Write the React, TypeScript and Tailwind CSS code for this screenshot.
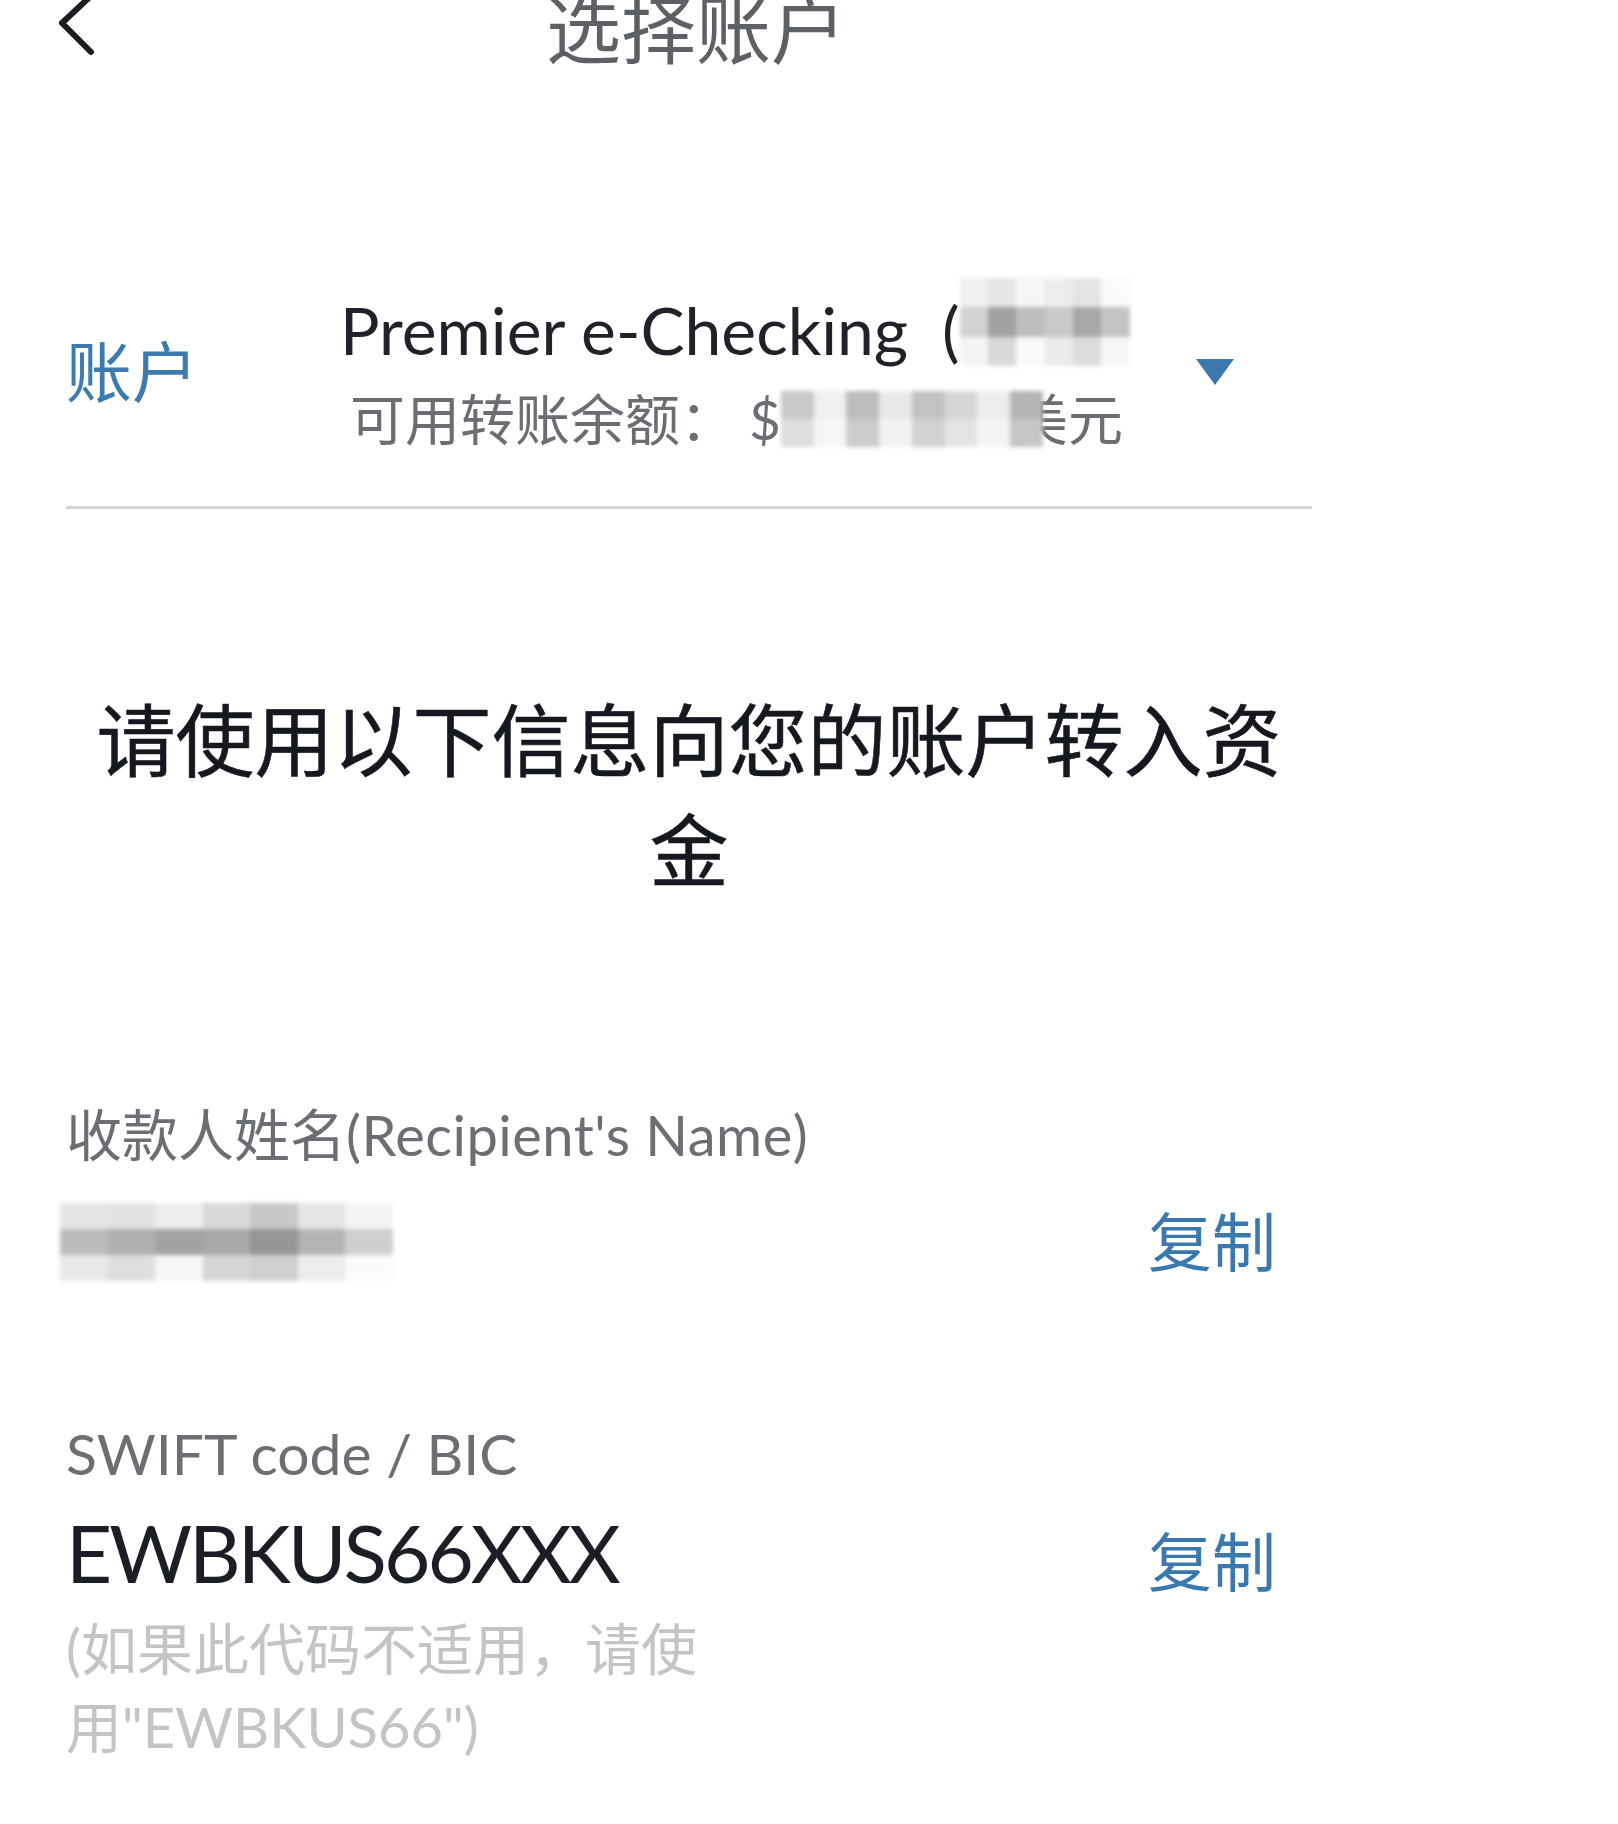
import { FC } from 'react';

const ACCOUNT_BLUR = [
  'bg-[#f0f0f0]', 'bg-[#e6e6e6]', 'bg-[#f6f6f6]', 'bg-[#ececec]', 'bg-[#e4e4e4]', 'bg-[#fafafa]',
  'bg-[#d2d2d2]', 'bg-[#a2a2a2]', 'bg-[#bdbdbd]', 'bg-[#c9c9c9]', 'bg-[#a8a8a8]', 'bg-[#c4c4c4]',
  'bg-[#f4f4f4]', 'bg-[#d8d8d8]', 'bg-[#fafafa]', 'bg-[#ebebeb]', 'bg-[#dcdcdc]', 'bg-[#f7f7f7]',
];

const BALANCE_BLUR = [
  'bg-[#c9c9c9]', 'bg-[#f0f0f0]', 'bg-[#bdbdbd]', 'bg-[#e9e9e9]', 'bg-[#c2c2c2]', 'bg-[#d6d6d6]', 'bg-[#ededed]', 'bg-[#b5b5b5]',
  'bg-[#dedede]', 'bg-[#f6f6f6]', 'bg-[#cccccc]', 'bg-[#f2f2f2]', 'bg-[#d2d2d2]', 'bg-[#e4e4e4]', 'bg-[#f4f4f4]', 'bg-[#c6c6c6]',
];

const NAME_BLUR = [
  'bg-[#e4e4e4]', 'bg-[#e2e2e2]', 'bg-[#eeeeee]', 'bg-[#d8d8d8]', 'bg-[#c8c8c8]', 'bg-[#e6e6e6]', 'bg-[#f3f3f3]',
  'bg-[#bcbcbc]', 'bg-[#b0b0b0]', 'bg-[#a2a2a2]', 'bg-[#a9a9a9]', 'bg-[#969696]', 'bg-[#b4b4b4]', 'bg-[#cfcfcf]',
  'bg-[#e9e9e9]', 'bg-[#dedede]', 'bg-[#f6f6f6]', 'bg-[#d6d6d6]', 'bg-[#d0d0d0]', 'bg-[#ececec]', 'bg-[#fafafa]',
];

const Mosaic: FC<{ cells: string[]; className: string }> = ({ cells, className }) => (
  <span className={`inline-grid blur-[2px] ${className}`}>
    {cells.map((c, i) => (
      <span key={i} className={c} />
    ))}
  </span>
);

const CopyButton: FC = () => (
  <button className="text-[64px] leading-none text-[#3a78ad]">复制</button>
);

const App: FC = () => {
  return (
    <div className="min-h-[1824px] w-[1618px] overflow-hidden bg-white font-['Lato','Noto_Sans_CJK_SC',sans-serif]">
      <div className="w-[1378px] px-[66px]">
        {/* header */}
        <div className="relative flex h-[66px] justify-center">
          <svg
            className="absolute left-[-16px] top-[-10px]"
            width="50"
            height="70"
            viewBox="0 0 50 70"
            fill="none"
          >
            <polyline
              points="43,4 12,33 41,62"
              stroke="#1a1d22"
              strokeWidth="6"
              strokeLinecap="round"
              strokeLinejoin="round"
            />
          </svg>
          <h1 className="-mt-[8px] ml-[14px] text-[75px] leading-none text-[#5d6166]">选择账户</h1>
        </div>

        {/* account selector */}
        <div className="mt-[224px] flex items-center border-b-[3px] border-[#d5d5d5] pb-[52px]">
          <span className="w-[274px] text-[66px] leading-none text-[#3b7bb0]">账户</span>
          <div className="flex flex-1 flex-col">
            <div className="flex items-center whitespace-nowrap text-[66px] leading-[80px] text-[#1f2329]">
              Premier e-Checking&nbsp;&nbsp;(
              <Mosaic cells={ACCOUNT_BLUR} className="-mt-[16px] h-[88px] w-[170px] grid-cols-6 grid-rows-3" />
            </div>
            <div className="mt-[14px] flex items-center whitespace-nowrap pl-[10px] text-[55px] leading-[70px] text-[#6a6e73]">
              可用转账余额：&nbsp;$
              <Mosaic cells={BALANCE_BLUR} className="relative -mr-[30px] h-[56px] w-[262px] grid-cols-8 grid-rows-2" />
              美元
            </div>
          </div>
          <svg className="mr-[78px]" width="38" height="26" viewBox="0 0 38 26">
            <polygon points="0,0 38,0 19,26" fill="#3a78ad" />
          </svg>
        </div>

        {/* heading */}
        <h2 className="mt-[177px] text-center text-[79px] font-normal leading-[110px] text-[#15181e] [-webkit-text-stroke:0.6px_#15181e]">
          请使用以下信息向您的账户转入资金
        </h2>

        {/* recipient */}
        <div className="mt-[194px]">
          <p className="text-[56px] leading-[70px] text-[#6b6f74]">
            收款人姓名<span className="tracking-[0.5px]">(Recipient's Name)</span>
          </p>
          <div className="mt-[22px] flex h-[100px] items-center justify-between pr-[36px]">
            <Mosaic cells={NAME_BLUR} className="-ml-[6px] h-[78px] w-[333px] grid-cols-7 grid-rows-3" />
            <CopyButton />
          </div>
        </div>

        {/* swift */}
        <div className="mt-[126px]">
          <p className="text-[57px] leading-[70px] text-[#6b6f74]">SWIFT code / BIC</p>
          <div className="mt-[19px] flex items-center justify-between pr-[36px]">
            <span className="text-[80px] leading-[90px] tracking-[-3px] text-[#1b1e24]">EWBKUS66XXX</span>
            <span className="mt-[20px]">
              <CopyButton />
            </span>
          </div>
          <p className="mt-[13px] text-[56px] leading-[78px] text-[#c4c4c4]">
            (如果此代码不适用，请使
            <br />
            用"EWBKUS66")
          </p>
        </div>
      </div>
    </div>
  );
};

export default App;
